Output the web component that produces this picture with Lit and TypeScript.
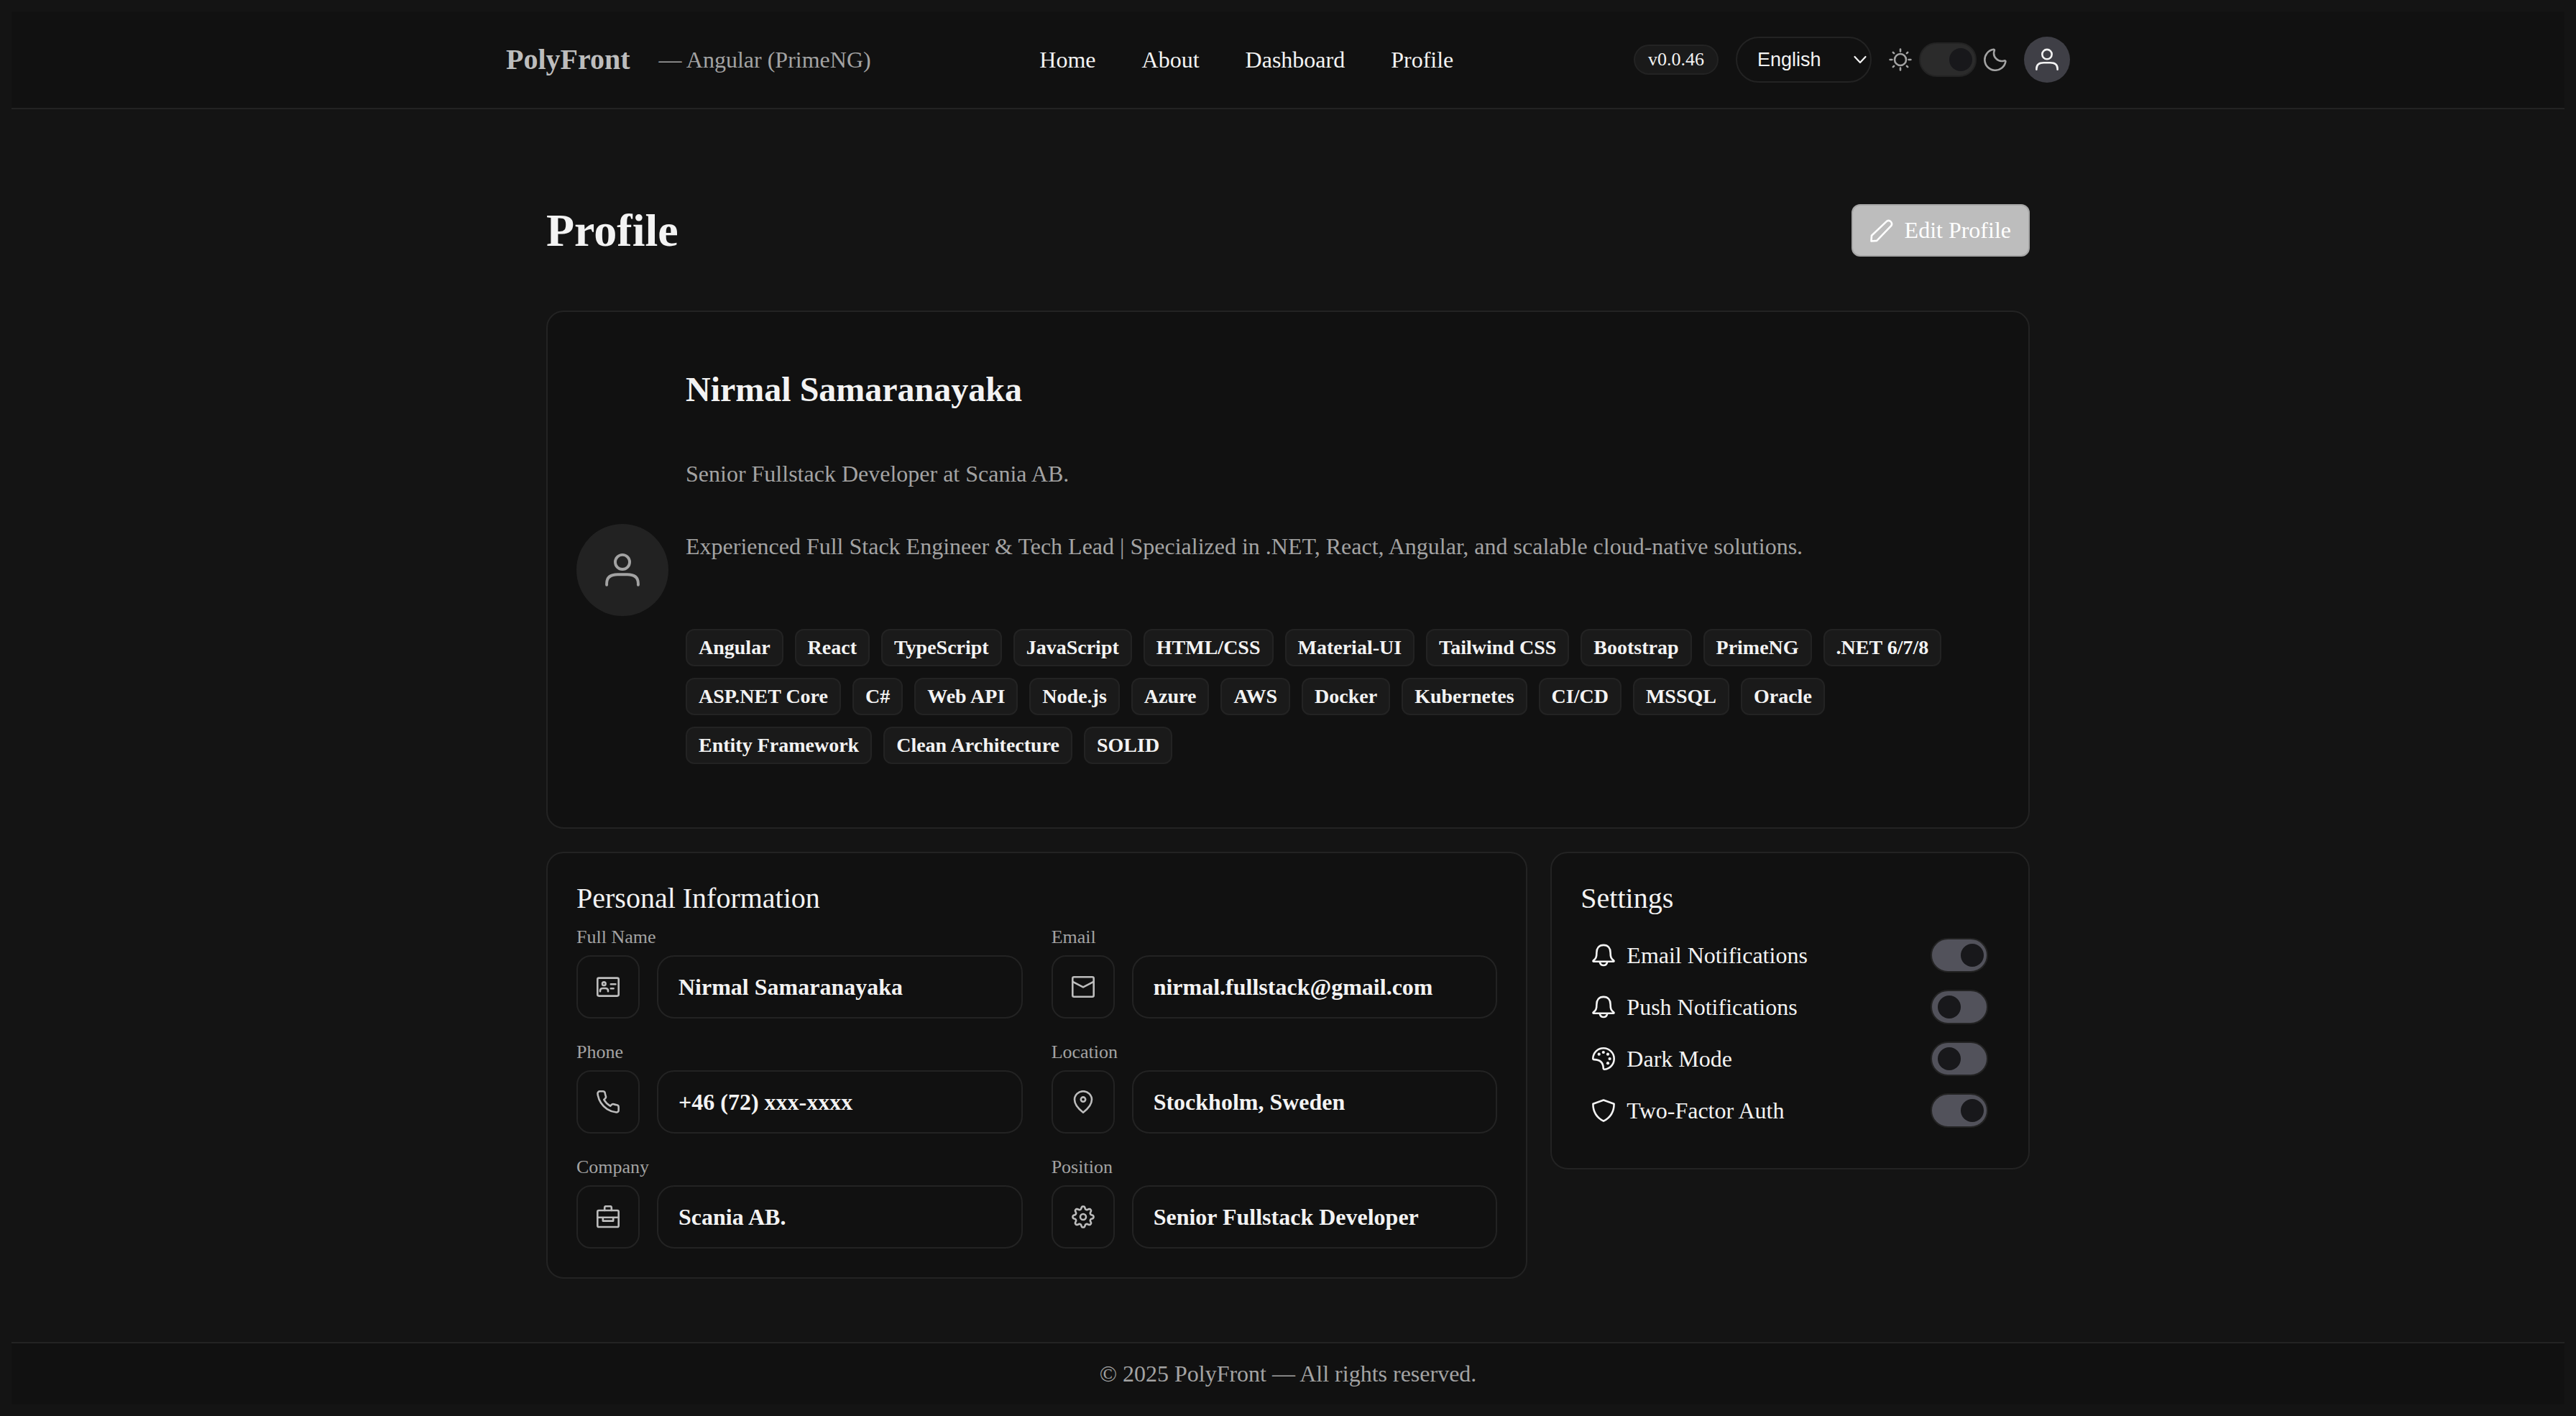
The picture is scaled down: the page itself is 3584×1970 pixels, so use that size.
import { LitElement, html, svg, css, SVGTemplateResult } from "lit";
import { customElement, state } from "lit/decorators.js";

/** Outline of a rounded eight-tooth cog inside a 32 by 32 box. */
const cogOutline = (): string => {
  const steps = 128;
  const points: string[] = [];
  for (let i = 0; i < steps; i++) {
    const angle = (i / steps) * Math.PI * 2;
    const radius = 12.7 + 2 * Math.tanh(1.5 * Math.cos(8 * angle));
    const x = 16 + radius * Math.sin(angle);
    const y = 16 - radius * Math.cos(angle);
    points.push(`${x.toFixed(2)} ${y.toFixed(2)}`);
  }
  return `M${points.join("L")}Z`;
};

const glyphs: Record<string, SVGTemplateResult> = {
  user: svg`<circle cx="16" cy="8.6" r="6.7"/><path d="M1.4 29.8v-1.3C1.4 22.6 5.6 20.2 11.6 20.2h8.8c6 0 10.2 2.4 10.2 8.3v1.3"/>`,
  sun: svg`<circle cx="16" cy="16" r="8"/><path d="M16 1.6v2.8M16 27.6v2.8M1.6 16h2.8M27.6 16h2.8M5.8 5.8l1.3 1.3M24.9 24.9l1.3 1.3M5.8 26.2l1.3-1.3M24.9 7.1l1.3-1.3"/>`,
  moon: svg`<path d="M13.2 1.8c1.3-.3 2 .5 1.5 1.7A10.9 10.9 0 0 0 28.4 17.4c1.2-.5 2.2.2 1.9 1.5A14.6 14.6 0 1 1 13.2 1.8Z"/>`,
  pencil: svg`<path d="M1.5 30.5l.5-7.7L23.2 2.6a4.6 4.6 0 0 1 6.2 6.3L9.2 29.9Z"/>`,
  card: svg`<rect x="1.3" y="3.6" width="29.4" height="25" rx="2"/><circle cx="10.3" cy="11.7" r="2.3"/><path d="M5 22.2v-1c0-2 1.6-3.2 3.600-3.200h3.800c2 0 3.600 1.200 3.600 3.200v1M19.800 12.200h6.600M19.800 18.300h3.800"/>`,
  phone: svg`<g transform="translate(-1.600 -1.600) scale(1.467)"><path stroke-width="1.750" d="M22 16.920v3a2 2 0 0 1-2.180 2 19.790 19.790 0 0 1-8.630-3.070 19.500 19.500 0 0 1-6-6 19.790 19.790 0 0 1-3.070-8.670A2 2 0 0 1 4.110 2h3a2 2 0 0 1 2 1.720 12.840 12.840 0 0 0 .7 2.810 2 2 0 0 1-.45 2.110L8.090 9.910a16 16 0 0 0 6 6l1.270-1.270a2 2 0 0 1 2.110-.45 12.840 12.840 0 0 0 2.810.7A2 2 0 0 1 22 16.920z"/></g>`,
  briefcase: svg`<rect x="1.3" y="7" width="29.4" height="23" rx="1.8"/><path d="M11.200 7V3a1.800 1.800 0 0 1 1.800-1.800h6A1.800 1.800 0 0 1 20.800 3v4M1.300 16.800H30.700M8.800 16.800v4.800h14.400v-4.800"/>`,
  envelope: svg`<rect x="1.3" y="2.300" width="29.400" height="27.400" rx="2"/><path d="M1.600 8.800 16 16.400 30.400 8.800"/>`,
  pin: svg`<path d="M16 30.700C10.500 26.500 4 20.500 4 12.800a12 11.600 0 0 1 24 0C28 20.500 21.500 26.500 16 30.700Z"/><circle cx="16" cy="12.600" r="3.200"/>`,
  cog: svg`<path d=${cogOutline()}/><circle cx="16" cy="16" r="4"/>`,
  bell: svg`<path d="M16 1.900C9.500 1.900 6.400 6.200 6.400 12.200c0 6.300-1 8.800-4.600 11.200-.600.500-.300 1.300.4 1.300h27.600c.7 0 1-.8.4-1.300-3.600-2.400-4.600-4.900-4.600-11.200C25.600 6.200 22.500 1.900 16 1.900Z"/><path d="M10.800 25.500c.6 3 2.600 4.500 5.200 4.500s4.600-1.500 5.200-4.500"/>`,
  palette: svg`<path d="M16 1.300C7.900 1.300 1.600 7.600 1.300 15.400c0 1.200.6 1.700 1.800 1.700 8.600.2 12.400 4.300 12.600 11.800 0 1.300.7 1.900 1.900 1.800C25.200 30 30.700 23.600 30.700 16 30.700 7.900 24.100 1.300 16 1.300Z"/><g fill="currentColor" stroke="none"><circle cx="9.700" cy="9.700" r="2.100"/><circle cx="15.800" cy="7" r="2.100"/><circle cx="22" cy="9.700" r="2.100"/><circle cx="24.600" cy="16" r="2.100"/><circle cx="22" cy="22.200" r="2.100"/></g>`,
  shield: svg`<path d="M16 1.500 1.400 6.700C1.400 18.500 6 25.600 16 30.700c10-5.100 14.600-12.200 14.600-24Z"/>`,
};

const icon = (name: string, size = "small") => html`
  <svg class="icon ${size}" viewBox="0 0 32 32" aria-hidden="true">${glyphs[name]}</svg>
`;

const navLinks = ["Home", "About", "Dashboard", "Profile"];

const skills = [
  "Angular", "React", "TypeScript", "JavaScript", "HTML/CSS", "Material-UI",
  "Tailwind CSS", "Bootstrap", "PrimeNG", ".NET 6/7/8", "ASP.NET Core", "C#",
  "Web API", "Node.js", "Azure", "AWS", "Docker", "Kubernetes", "CI/CD",
  "MSSQL", "Oracle", "Entity Framework", "Clean Architecture", "SOLID",
];

const fields = [
  { id: "full-name", label: "Full Name", icon: "card", value: "Nirmal Samaranayaka" },
  { id: "email", label: "Email", icon: "envelope", value: "nirmal.fullstack@gmail.com" },
  { id: "phone", label: "Phone", icon: "phone", value: "+46 (72) xxx-xxxx" },
  { id: "location", label: "Location", icon: "pin", value: "Stockholm, Sweden" },
  { id: "company", label: "Company", icon: "briefcase", value: "Scania AB." },
  { id: "position", label: "Position", icon: "cog", value: "Senior Fullstack Developer" },
];

@customElement("app-root")
export class AppRoot extends LitElement {
  @state() private settings = [
    { id: "email-notifications", label: "Email Notifications", icon: "bell", on: true },
    { id: "push-notifications", label: "Push Notifications", icon: "bell", on: false },
    { id: "dark-mode", label: "Dark Mode", icon: "palette", on: false },
    { id: "two-factor", label: "Two-Factor Auth", icon: "shield", on: true },
  ];

  static styles = css`
    :host {
      --line: #232323;
      --panel: #111111;
      --text: #f3f3f3;
      --muted: #a3a3a3;
      display: flex;
      flex-direction: column;
      box-sizing: border-box;
      min-height: 100vh;
      padding: 16px;
      background: #141414;
      color: var(--text);
      font-family: "Liberation Serif", "Times New Roman", serif;
      font-size: 32px;
      line-height: 37px;
    }
    *, *::before { box-sizing: border-box; }
    h1, h2, p { margin: 0; }

    .icon {
      flex: none;
      display: block;
      width: 32px;
      height: 32px;
      fill: none;
      stroke: currentColor;
      stroke-width: 2.6;
      stroke-linecap: round;
      stroke-linejoin: round;
    }
    .icon.large { width: 48px; height: 48px; }

    .header {
      background: var(--panel);
      border-bottom: 2px solid var(--line);
    }
    .header-inner {
      display: flex;
      align-items: center;
      justify-content: space-between;
      max-width: 2176px;
      min-height: 134px;
      margin: 0 auto;
    }
    .brand { display: flex; align-items: center; gap: 40px; }
    .brand-name {
      color: #bdbdbd;
      font-size: 40px;
      font-weight: 700;
      line-height: 46px;
      text-decoration: none;
    }
    .brand-note { color: var(--muted); }
    .nav { display: flex; gap: 64px; }
    .nav-link { color: var(--text); text-decoration: none; }
    .tools {
      display: flex;
      align-items: center;
      gap: 24px;
      padding-left: 16px;
    }
    .version {
      padding: 4px 18px;
      border: 2px solid var(--line);
      border-radius: 24px;
      background: #1a1a1a;
      font-size: 26px;
      line-height: 30px;
    }
    .language { display: grid; align-items: center; }
    .language-select {
      grid-area: 1 / 1;
      width: 189px;
      height: 64px;
      padding: 0 48px 0 28px;
      appearance: none;
      border: 2px solid var(--line);
      border-radius: 32px;
      background: var(--panel);
      color: var(--text);
      font-family: "Liberation Sans", Arial, sans-serif;
      font-size: 27px;
    }
    .chevron {
      grid-area: 1 / 1;
      justify-self: end;
      width: 20px;
      height: 12px;
      margin-right: 6px;
      fill: none;
      stroke: currentColor;
      stroke-width: 2.2;
      stroke-linecap: round;
      stroke-linejoin: round;
      pointer-events: none;
    }
    .theme {
      display: flex;
      align-items: center;
      gap: 10px;
      color: var(--muted);
    }
    .account {
      display: grid;
      place-items: center;
      width: 64px;
      height: 64px;
      padding: 0;
      border: 0;
      border-radius: 50%;
      background: #3f3f46;
      color: var(--text);
    }

    .switch {
      display: flex;
      align-items: center;
      flex: none;
      width: 80px;
      height: 48px;
      margin: 0;
      padding-left: 8px;
      appearance: none;
      border: 2px solid var(--line);
      border-radius: 24px;
      background: #52525b;
      cursor: pointer;
    }
    .switch::before {
      content: "";
      width: 32px;
      height: 32px;
      border-radius: 50%;
      background: #18181b;
    }
    .switch:checked { padding-left: 40px; }
    .switch.dim { background: #2b2b2b; }

    .main {
      width: 100%;
      max-width: 2064px;
      margin: 0 auto;
      padding: 132px 0 88px;
    }
    .title-row {
      display: flex;
      align-items: center;
      justify-content: space-between;
      margin-bottom: 75px;
    }
    .title { font-size: 64px; line-height: 72px; }
    .edit {
      display: flex;
      align-items: center;
      gap: 16px;
      height: 73px;
      padding: 0 24px;
      border: 2px solid #a6a6a6;
      border-radius: 12px;
      background: #bdbdbd;
      color: #ffffff;
      font: inherit;
    }

    .card {
      padding: 40px;
      border: 2px solid var(--line);
      border-radius: 24px;
      background: var(--panel);
    }
    .person { display: flex; align-items: center; gap: 24px; }
    .portrait {
      display: grid;
      place-items: center;
      flex: none;
      width: 128px;
      height: 128px;
      border-radius: 50%;
      background: #222222;
      color: var(--muted);
    }
    .bio { padding: 40px 0 48px; }
    .name { margin-bottom: 72px; font-size: 48px; line-height: 55px; }
    .bio-line { margin-bottom: 64px; color: var(--muted); }
    .bio-line.last { margin-bottom: 96px; }
    .chips {
      display: flex;
      flex-wrap: wrap;
      gap: 16px;
      margin: 0;
      padding: 0;
      list-style: none;
    }
    .chip {
      padding: 8px 16px;
      border: 2px solid var(--line);
      border-radius: 12px;
      background: #1a1a1a;
      font-size: 28px;
      font-weight: 700;
      line-height: 32px;
    }

    .columns {
      display: grid;
      grid-template-columns: repeat(12, minmax(0, 1fr));
      align-items: start;
      gap: 32px;
      margin-top: 32px;
    }
    .info { grid-column: span 8; }
    .prefs { grid-column: span 4; }
    .card-title { font-size: 40px; font-weight: 400; line-height: 46px; }
    .fields {
      display: grid;
      grid-template-columns: repeat(2, minmax(0, 1fr));
      gap: 32px 40px;
      margin-top: 16px;
    }
    .field { display: flex; flex-direction: column; gap: 10px; }
    .field-label { color: var(--muted); font-size: 26px; line-height: 30px; }
    .field-row { display: flex; gap: 24px; }
    .field-icon {
      display: grid;
      place-items: center;
      flex: none;
      width: 88px;
      height: 88px;
      border: 2px solid var(--line);
      border-radius: 20px;
      color: #bdbdbd;
    }
    .field-value {
      flex: 1;
      min-width: 0;
      height: 88px;
      padding: 0 28px;
      border: 2px solid var(--line);
      border-radius: 24px;
      background: transparent;
      color: var(--text);
      font: inherit;
      font-weight: 700;
    }
    .settings {
      display: flex;
      flex-direction: column;
      gap: 24px;
      padding: 32px 16px 16px;
    }
    .setting { display: flex; align-items: center; justify-content: space-between; }
    .setting-label { display: flex; align-items: center; gap: 16px; }

    .footer {
      margin-top: auto;
      padding: 24px;
      border-top: 2px solid var(--line);
      background: var(--panel);
      color: var(--muted);
      text-align: center;
    }
  `;

  private toggle(id: string) {
    this.settings = this.settings.map((s) => (s.id === id ? { ...s, on: !s.on } : s));
  }

  render() {
    return html`
      <header class="header">
        <div class="header-inner">
          <div class="brand">
            <a class="brand-name" href="#">PolyFront</a>
            <span class="brand-note">— Angular (PrimeNG)</span>
          </div>
          <nav class="nav">
            ${navLinks.map((name) => html`<a class="nav-link" href="#${name.toLowerCase()}">${name}</a>`)}
          </nav>
          <div class="tools">
            <span class="version">v0.0.46</span>
            <div class="language">
              <select class="language-select" aria-label="Language">
                <option>English</option>
              </select>
              <svg class="chevron" viewBox="0 0 20 12" aria-hidden="true">
                <path d="M2.500 2 10 10 17.500 2" />
              </svg>
            </div>
            <div class="theme">
              ${icon("sun")}
              <input class="switch dim" type="checkbox" role="switch" aria-label="Dark theme" checked />
              ${icon("moon")}
            </div>
            <button class="account" type="button" aria-label="Account">${icon("user")}</button>
          </div>
        </div>
      </header>

      <main class="main">
        <div class="title-row">
          <h1 class="title">Profile</h1>
          <button class="edit" type="button">${icon("pencil")}<span>Edit Profile</span></button>
        </div>

        <section class="card person">
          <div class="portrait">${icon("user", "large")}</div>
          <div class="bio">
            <h2 class="name">Nirmal Samaranayaka</h2>
            <p class="bio-line">Senior Fullstack Developer at Scania AB.</p>
            <p class="bio-line last">
              Experienced Full Stack Engineer &amp; Tech Lead | Specialized in .NET, React, Angular, and scalable
              cloud-native solutions.
            </p>
            <ul class="chips">
              ${skills.map((skill) => html`<li class="chip">${skill}</li>`)}
            </ul>
          </div>
        </section>

        <div class="columns">
          <section class="card info">
            <h2 class="card-title">Personal Information</h2>
            <div class="fields">
              ${fields.map(
                (field) => html`
                  <div class="field">
                    <label class="field-label" for=${field.id}>${field.label}</label>
                    <div class="field-row">
                      <span class="field-icon">${icon(field.icon)}</span>
                      <input class="field-value" id=${field.id} type="text" readonly .value=${field.value} />
                    </div>
                  </div>
                `,
              )}
            </div>
          </section>

          <section class="card prefs">
            <h2 class="card-title">Settings</h2>
            <div class="settings">
              ${this.settings.map(
                (item) => html`
                  <div class="setting">
                    <label class="setting-label" for=${item.id}>${icon(item.icon)}<span>${item.label}</span></label>
                    <input
                      class="switch"
                      id=${item.id}
                      type="checkbox"
                      role="switch"
                      .checked=${item.on}
                      @change=${() => this.toggle(item.id)}
                    />
                  </div>
                `,
              )}
            </div>
          </section>
        </div>
      </main>

      <footer class="footer">© 2025 PolyFront — All rights reserved.</footer>
    `;
  }
}
